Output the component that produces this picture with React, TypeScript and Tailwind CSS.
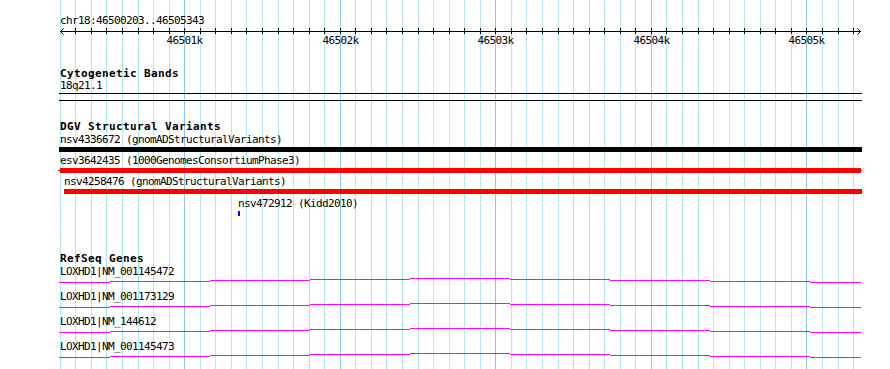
import React from "react";

const gx = (n: number) => Math.floor(60.3 + n * 15.556);
const GRID = Array.from({ length: 52 }, (_, n) => n);
const MAJOR = [
  { n: 8, label: "46501k" },
  { n: 18, label: "46502k" },
  { n: 28, label: "46503k" },
  { n: 38, label: "46504k" },
  { n: 48, label: "46505k" },
];

const SEGS: [number, number, number][] = [
  [0, 51, 4],
  [51, 151, 3],
  [151, 251, 2],
  [251, 351, 1],
  [351, 451, 0],
  [451, 551, 1],
  [551, 651, 2],
  [651, 751, 3],
  [751, 802, 4],
];

const GENES = [
  "LOXHD1|NM_001145472",
  "LOXHD1|NM_001173129",
  "LOXHD1|NM_144612",
  "LOXHD1|NM_001145473",
];

function GeneLine() {
  return (
    <svg width={803} height={5} className="ml-[59px] block">
      {SEGS.map(([a, b, y], i) => (
        <rect key={i} x={a} y={y} width={b - a} height={1} fill="#ff00ff" />
      ))}
    </svg>
  );
}

function Title({ children, className = "" }: { children: React.ReactNode; className?: string }) {
  return (
    <div className={`ml-[60px] font-bold text-[11px] leading-[12px] tracking-[0.38px] whitespace-nowrap ${className}`}>
      {children}
    </div>
  );
}

export default function App() {
  return (
    <div className="relative w-[890px] h-[369px] overflow-hidden bg-white text-black font-['DejaVu_Sans_Mono',monospace] text-[11px] leading-[12px] tracking-[-0.62px]">
      <svg className="absolute inset-0" width={890} height={369}>
        {GRID.map((n) => {
          const major = (n - 8) % 10 === 0;
          return (
            <rect
              key={n}
              x={gx(n)}
              y={0}
              width={1}
              height={369}
              fill={major ? "#88c8ea" : "#ade9ef"}
            />
          );
        })}
      </svg>

      <div className="relative pt-[15px]">
        <div className="ml-[60px] whitespace-nowrap">chr18:46500203..46505343</div>

        <svg width={890} height={20} className="block">
          <rect x={60} y={4} width={801} height={1} fill="#000" />
          {GRID.slice(1).map((n) => (
            <rect key={n} x={gx(n)} y={1} width={1} height={6} fill="#000" />
          ))}
          <polyline points="63.5,1.5 60.5,4.5 63.5,7.5" fill="none" stroke="#000" strokeWidth={1} />
          <polyline points="857.5,1.5 860.5,4.5 857.5,7.5" fill="none" stroke="#000" strokeWidth={1} />
          {MAJOR.map((m) => (
            <text
              key={m.n}
              x={gx(m.n) + 0.5}
              y={17}
              textAnchor="middle"
              fontSize={11}
              letterSpacing={-0.62}
              fontFamily="'DejaVu Sans Mono', monospace"
              fill="#000"
            >
              {m.label}
            </text>
          ))}
        </svg>

        <Title className="mt-[21px]">Cytogenetic Bands</Title>
        <div className="ml-[60px]">18q21.1</div>
        <div className="mt-px ml-[59px] w-[803px] h-px bg-black" />
        <div className="mt-[6px] ml-[59px] w-[803px] h-px bg-black" />

        <Title className="mt-[20px]">DGV Structural Variants</Title>
        <div className="mt-px ml-[60px] whitespace-nowrap">nsv4336672 (gnomADStructuralVariants)</div>
        <div className="mt-px ml-[59px] w-[803px] h-[5px] bg-black" />
        <div className="mt-[3px] ml-[60px] whitespace-nowrap">esv3642435 (1000GenomesConsortiumPhase3)</div>
        <div className="mt-px ml-[58px] flex items-center">
          <div className="w-[2px] h-px bg-[#ff0000]" />
          <div className="w-[801px] h-[5px] bg-[#ff0000]" />
          <div className="w-px h-px bg-[#ff0000]" />
        </div>
        <div className="mt-[3px] ml-[64px] whitespace-nowrap">nsv4258476 (gnomADStructuralVariants)</div>
        <div className="mt-px ml-[64px] w-[798px] h-[5px] bg-[#ff0000]" />
        <div className="mt-[4px] ml-[238px] whitespace-nowrap">nsv472912 (Kidd2010)</div>
        <div className="mt-px ml-[238px] w-[2px] h-[5px] bg-[#0000ff]" />

        <Title className="mt-[37px]">RefSeq Genes</Title>
        <div className="flex flex-col gap-[8px] mt-px">
          {GENES.map((g) => (
            <div key={g}>
              <div className="ml-[60px] whitespace-nowrap">{g}</div>
              <GeneLine />
            </div>
          ))}
        </div>
      </div>
    </div>
  );
}
